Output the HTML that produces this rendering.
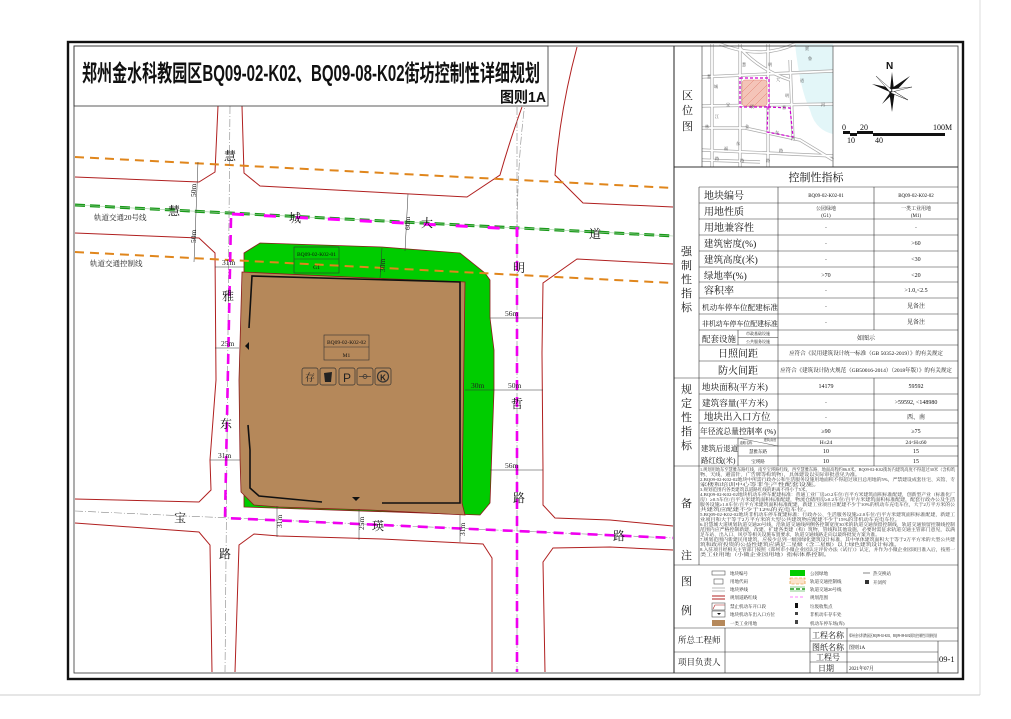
<!DOCTYPE html>
<html><head><meta charset="utf-8"><style>
html,body{margin:0;padding:0;background:#fff;}
svg{display:block;}
.s{font-family:"Liberation Serif","Noto Serif CJK SC",serif;}
.k{font-family:"Liberation Sans","Noto Sans CJK SC",sans-serif;}
</style></head><body>
<svg width="1011" height="719" viewBox="0 0 1011 719" xmlns="http://www.w3.org/2000/svg">
<rect width="1011" height="719" fill="#fff"/>
<line x1="980" y1="0" x2="980" y2="695" stroke="#ddd" stroke-width="1"/>
<line x1="0" y1="695" x2="980" y2="695" stroke="#ccc" stroke-width="1"/>

<!-- MAP -->
<g fill="none">
<g stroke="#b02020" stroke-width="1">
<path d="M75,177 L199,182 L215,172 L218,106"/>
<path d="M242,106 L244,173 L260,186 L410,194 L467,197 L500,175 Q510,140 522,107"/>
<path d="M577,47 Q560,110 555,175 L583,203 L673,207"/>
<path d="M75,233 L199,238 L215,253 L216,380 L210,460 L211,490 L199,502 L75,499"/>
<path d="M75,523 L199,532 L210,545 L212,672"/>
<path d="M235,672 L239,545 L254,534 L279,536 L382,539 L483,544 L492,558 L492,672"/>
<path d="M545,672 L543,562 L553,548 L610,547 L673,550"/>
<path d="M673,526 L610,520 L555,518 L543,505 L543,470 L542,353 L543,283 L577,259 L673,264"/>
</g>
<path d="M244,253 L260,243 L382,247 L460,253 L485,273 L490,280 L490,318 L494,350 L494,390 L490,503 L480,515 L244,507 Z" fill="#00cc00" stroke="#8b1a1a" stroke-width="0.8"/>
<path d="M242,272 L370,278 L465,282 L462,503 L465,515 L370,510 L279,507 L254,505 L241,492 L240,458 L239,380 Z" fill="#b5885a" stroke="#8b1a1a" stroke-width="0.8"/>
<g stroke="#111" stroke-width="1.6">
<path d="M249,328 L252,276 L460,282 L460,503 L382,503"/>
<path d="M248,425 L250,450 L250,488 L259,496 L322,502"/>
</g>
<g stroke="#e0861c" stroke-width="2" stroke-dasharray="9,6">
<path d="M75,157 L673,188"/>
<path d="M75,252 L673,283"/>
</g>
<path d="M75,205 L673,236" stroke="#fff" stroke-width="4"/>
<path d="M75,205 L673,236" stroke="#1a9a1a" stroke-width="3" stroke-dasharray="10,5"/>
<path d="M75,205 L673,236" stroke="#9c9" stroke-width="0.6"/>
<path d="M232,214 L517,229" stroke="#f0f" stroke-width="3" stroke-dasharray="12,20"/>
<g stroke="#888" stroke-width="0.6" stroke-dasharray="8,2,1,2">
<path d="M230,106 L225,672"/>
<path d="M75,511 L673,538"/>
<path d="M517,107 L517,672"/>
<path d="M535,47 Q518,120 517,230"/>
</g>
<g stroke="#f000f0" stroke-width="2.6" stroke-dasharray="10,7">
<path d="M231,218 L225,518 L673,538"/>
<path d="M517,227 L517,672"/>
</g>
<path d="M517,227 L517,236" stroke="#f0f" stroke-width="3"/>
<g stroke="#333" stroke-width="0.5">
<path d="M198,162 L194,262"/>
<path d="M408,194 L405,251"/>
<path d="M215,267 L244,267"/><path d="M215,348 L239,348"/>
<path d="M210,460 L240,460"/>
<path d="M382,248 L380,278"/>
<path d="M490,318 L543,318"/>
<path d="M465,390 L494,390"/><path d="M494,390 L543,390"/>
<path d="M490,470 L543,470"/>
<path d="M277,506 L277,537"/><path d="M359,509 L359,540"/><path d="M460,515 L460,542"/>
</g>
</g>
<g class="s" font-size="12" fill="#111" text-anchor="middle">
<text x="230" y="160">慧</text><text x="174" y="215">慧</text><text x="295" y="222">城</text>
<text x="427" y="227">大</text><text x="595" y="238">道</text>
<text x="228" y="300">雅</text><text x="226" y="428">东</text><text x="225" y="558">路</text>
<text x="180" y="522">宝</text><text x="378" y="530">瑛</text><text x="619" y="540">路</text>
<text x="519" y="272">明</text><text x="517" y="408">哲</text><text x="519" y="502">路</text>
</g>
<g class="s" font-size="7.5" fill="#222">
<text x="94" y="220">轨道交通20号线</text>
<text x="90" y="266">轨道交通控制线</text>
<text x="222" y="265">31m</text><text x="221" y="346">25m</text><text x="218" y="458">31m</text>
<text x="505" y="316">56m</text><text x="471" y="388">30m</text><text x="508" y="388">50m</text><text x="505" y="468">56m</text>
<text transform="translate(196,197) rotate(-90)">50m</text>
<text transform="translate(196,243) rotate(-90)">50m</text>
<text transform="translate(410,230) rotate(-90)">60m</text>
<text transform="translate(385,272) rotate(-90)">30m</text>
<text transform="translate(282,528) rotate(-90)">31m</text>
<text transform="translate(364,530) rotate(-90)">25m</text>
<text transform="translate(465,536) rotate(-90)">31m</text>
</g>
<g stroke="#333" stroke-width="0.6" fill="none">
<rect x="294" y="247" width="45" height="26"/><line x1="294" y1="259" x2="339" y2="259"/>
<rect x="324" y="335" width="45" height="25"/><line x1="324" y1="347" x2="369" y2="347"/>
</g>
<g class="s" font-size="5.5" fill="#111" text-anchor="middle">
<text x="316.5" y="256">BQ09-02-K02-01</text><text x="316.5" y="269">G1</text>
<text x="346.5" y="344">BQ09-02-K02-02</text><text x="346.5" y="357">M1</text>
</g>
<g stroke="#333" stroke-width="0.7" fill="none">
<rect x="302" y="368" width="16" height="17" rx="2"/>
<rect x="320" y="368" width="16" height="17" rx="2"/>
<rect x="339" y="368" width="16" height="17" rx="2"/>
<rect x="357" y="368" width="16" height="17" rx="2"/>
<rect x="375" y="368" width="16" height="17" rx="2"/>
<line x1="359" y1="376.5" x2="371" y2="376.5"/><circle cx="365" cy="376.5" r="2"/>
<circle cx="383" cy="376.5" r="5.5" stroke-width="1.2"/>
</g>
<path d="M324,373 L332,372 L331,382 L325,382 Z" fill="#222"/>
<g class="k" fill="#222" text-anchor="middle">
<text x="310" y="381" font-size="10" class="s">存</text>
<text x="347" y="382" font-size="12">P</text>
<text x="383" y="380.5" font-size="8" font-weight="bold">K</text>
</g>
<path d="M245,346 L249,342 L249,350 Z" fill="#111"/>
<path d="M352,497 L360,497 L356,501 Z" fill="#111"/>

<rect x="74" y="46" width="474" height="60" fill="#fff" stroke="#333" stroke-width="0.8"/>
<text class="k" x="82" y="81" font-size="23" font-weight="bold" textLength="458" lengthAdjust="spacingAndGlyphs" fill="#111">郑州金水科教园区BQ09-02-K02、BQ09-08-K02街坊控制性详细规划</text>
<text class="k" x="500" y="102" font-size="15" font-weight="bold" textLength="46" lengthAdjust="spacingAndGlyphs" fill="#111">图则1A</text>

<!-- RIGHT PANEL -->
<rect x="674" y="46" width="284" height="627" fill="#fff"/>
<g>
<path d="M795,44 L833,44 L833,134 Q815,130 810,110 Q800,90 795,44 Z" fill="#e3f6f8"/>
<g stroke="#aaa" stroke-width="3.2" fill="none">
<path d="M702,77 L833,71"/><path d="M702,106 L833,104"/><path d="M702,128 L745,128 L800,140 L833,160"/>
<path d="M702,150 L833,156"/><path d="M702,160 L760,162"/>
<path d="M712,44 L712,167"/><path d="M740,44 L740,167"/><path d="M768,44 L768,167"/>
<path d="M790,60 L793,140"/><path d="M720,44 Q760,60 795,44"/><path d="M740,48 Q760,70 790,80"/>
</g>
<g stroke="#fff" stroke-width="1.8" fill="none">
<path d="M702,77 L833,71"/><path d="M702,106 L833,104"/><path d="M702,128 L745,128 L800,140 L833,160"/>
<path d="M702,150 L833,156"/><path d="M702,160 L760,162"/>
<path d="M712,44 L712,167"/><path d="M740,44 L740,167"/><path d="M768,44 L768,167"/>
<path d="M790,60 L793,140"/><path d="M720,44 Q760,60 795,44"/><path d="M740,48 Q760,70 790,80"/>
</g>
<rect x="742" y="80" width="25" height="26" rx="3" fill="#f4c4b8" stroke="#e08070" stroke-width="0.5"/>
<g stroke="#e08070" stroke-width="0.5"><path d="M742,92 L754,80 M742,100 L762,80 M746,106 L767,85 M754,106 L767,93"/></g>
<g stroke="#d000d0" stroke-width="1.2" stroke-dasharray="3,2" fill="none">
<path d="M740,78 L769,78 L769,107 L740,107 Z"/>
<path d="M768,107 L790,108 L793,137 L767,132 Z"/>
</g>
<g class="s" font-size="4" fill="#444">
<text x="742" y="66">慧</text><text x="768" y="66">明</text><text x="776" y="81">大</text><text x="800" y="82">道</text>
<text x="707" y="78">慧</text><text x="714" y="88">城</text><text x="726" y="106">宝</text><text x="750" y="108">瑛</text>
<text x="785" y="97">明</text><text x="782" y="109">哲</text><text x="821" y="106">河</text><text x="805" y="50">贾</text><text x="808" y="60">鲁</text>
<text x="715" y="118">江</text><text x="705" y="128">林</text><text x="745" y="128">金</text><text x="736" y="145">东</text><text x="724" y="150">福</text><text x="775" y="134">东</text><text x="791" y="140">裕</text><text x="779" y="152">路</text><text x="715" y="160">路</text><text x="740" y="162">路</text><text x="766" y="162">路</text>
</g>
</g>
<text class="k" x="886" y="69" font-size="10" font-weight="bold" fill="#111">N</text>
<g transform="translate(892,90)">
<path d="M0,-18 L2,0 L-2,0 Z" fill="#111"/>
<path d="M0,22 L3,0 L-3,0 Z" fill="#111"/>
<path d="M-20,-6 L0,-2 L0,3 Z" fill="#111"/>
<path d="M18,-14 L0,-2 L2,3 Z" fill="#111"/>
<path d="M-10,14 L0,0 L3,2 Z" fill="#111"/>
<path d="M16,10 L0,0 L-1,3 Z" fill="#fff" stroke="#111" stroke-width="0.5"/>
<path d="M-16,-14 L0,0 L-2,2 Z" fill="#fff" stroke="#111" stroke-width="0.4"/>
<path d="M20,-3 L0,-1 L0,2 Z" fill="#fff" stroke="#111" stroke-width="0.4"/>
</g>
<g fill="#111">
<rect x="843" y="131" width="7" height="3"/><rect x="850" y="133" width="7" height="3"/><rect x="857" y="131" width="16" height="3"/><rect x="873" y="133" width="72" height="3"/>
</g>
<g class="s" font-size="8" fill="#111">
<text x="842" y="130">0</text><text x="860" y="130">20</text><text x="933" y="130">100M</text>
<text x="847" y="143">10</text><text x="875" y="143">40</text>
</g>
<g stroke="#333" stroke-width="0.6" fill="none">
<line x1="702" y1="46" x2="702" y2="167"/><line x1="833" y1="46" x2="833" y2="167"/>
<line x1="674" y1="167" x2="958" y2="167" stroke-width="0.9"/>
<line x1="699" y1="187" x2="958" y2="187"/>
<line x1="699" y1="187" x2="699" y2="565"/>
<line x1="778" y1="187" x2="778" y2="466"/>
<line x1="874" y1="187" x2="874" y2="330"/>
<line x1="874" y1="378" x2="874" y2="466"/>
<line x1="699" y1="203" x2="958" y2="203"/><line x1="699" y1="219" x2="958" y2="219"/><line x1="699" y1="235" x2="958" y2="235"/>
<line x1="699" y1="251" x2="958" y2="251"/><line x1="699" y1="267" x2="958" y2="267"/><line x1="699" y1="282" x2="958" y2="282"/>
<line x1="699" y1="298" x2="958" y2="298"/><line x1="699" y1="314" x2="958" y2="314"/><line x1="699" y1="330" x2="958" y2="330"/>
<line x1="738" y1="330" x2="738" y2="345"/><line x1="738" y1="337.5" x2="778" y2="337.5"/>
<line x1="699" y1="345" x2="958" y2="345"/><line x1="699" y1="361" x2="958" y2="361"/>
<line x1="674" y1="378" x2="958" y2="378"/>
<line x1="699" y1="394" x2="958" y2="394"/><line x1="699" y1="410" x2="958" y2="410"/><line x1="699" y1="423" x2="958" y2="423"/>
<line x1="699" y1="438" x2="958" y2="438"/>
<line x1="738" y1="438" x2="738" y2="466"/><line x1="738" y1="446" x2="958" y2="446"/><line x1="738" y1="456" x2="958" y2="456"/>
<line x1="738" y1="438" x2="778" y2="446" stroke-width="0.4"/>
<line x1="674" y1="466" x2="958" y2="466"/>
<line x1="674" y1="565" x2="958" y2="565"/>
<line x1="674" y1="628" x2="958" y2="628"/>
<line x1="725" y1="628" x2="725" y2="673"/><line x1="810" y1="628" x2="810" y2="673"/><line x1="847" y1="628" x2="847" y2="673"/>
<line x1="674" y1="652" x2="810" y2="652"/>
<line x1="810" y1="641" x2="958" y2="641"/><line x1="810" y1="652" x2="938" y2="652"/><line x1="810" y1="662" x2="938" y2="662"/>
<line x1="938" y1="641" x2="938" y2="673"/>
</g>
<g class="s" fill="#111">
<text x="682" y="99" font-size="11">区</text><text x="682" y="114" font-size="11">位</text><text x="682" y="130" font-size="11">图</text>
<text x="816" y="181" font-size="11" text-anchor="middle">控制性指标</text>
<g font-size="11"><text x="681" y="255">强</text><text x="681" y="269">制</text><text x="681" y="283">性</text><text x="681" y="297">指</text><text x="681" y="311">标</text>
<text x="681" y="393">规</text><text x="681" y="407">定</text><text x="681" y="421">性</text><text x="681" y="435">指</text><text x="681" y="449">标</text>
<text x="681" y="507">备</text><text x="681" y="559">注</text>
<text x="681" y="585">图</text><text x="681" y="614">例</text></g>
<g font-size="10">
<text x="704" y="199">地块编号</text><text x="704" y="215">用地性质</text><text x="704" y="231">用地兼容性</text>
<text x="704" y="247" font-size="9.5">建筑密度(%)</text><text x="704" y="263" font-size="9.5">建筑高度(米)</text><text x="704" y="279" font-size="9.5">绿地率(%)</text>
<text x="704" y="294">容积率</text>
<text x="702" y="310" font-size="7.6">机动车停车位配建标准</text>
<text x="702" y="326" font-size="6.9">非机动车停车位配建标准</text>
<text x="702" y="342" font-size="8.5">配套设施</text>
<text x="718" y="357">日照间距</text><text x="718" y="374">防火间距</text>
<text x="702" y="390" font-size="8.6">地块面积(平方米)</text><text x="702" y="406" font-size="8.6">建筑容量(平方米)</text>
<text x="704" y="420" font-size="9.5">地块出入口方位</text>
<text x="700" y="434" font-size="7.8">年径流总量控制率 (%)</text>
<text x="701" y="451" font-size="7.4">建筑后退道</text><text x="701" y="463" font-size="7.4">路红线(米)</text>
</g>
<g font-size="5" text-anchor="middle">
<text x="826" y="197">BQ09-02-K02-01</text><text x="916" y="197">BQ09-02-K02-02</text>
<text x="826" y="210">公园绿地</text><text x="826" y="217">(G1)</text><text x="916" y="210">一类工业用地</text><text x="916" y="217">(M1)</text>
<text x="826" y="229">-</text><text x="916" y="229">-</text>
<text x="826" y="245">-</text><text x="916" y="245" font-size="6">&gt;60</text>
<text x="826" y="261">-</text><text x="916" y="261" font-size="6">&lt;30</text>
<text x="826" y="277" font-size="6">&gt;70</text><text x="916" y="277" font-size="6">&lt;20</text>
<text x="826" y="292">-</text><text x="916" y="292" font-size="6">&gt;1.0,&lt;2.5</text>
<text x="826" y="308">-</text><text x="916" y="308" font-size="6">见备注</text>
<text x="826" y="324">-</text><text x="916" y="324" font-size="6">见备注</text>
<text x="758" y="335" font-size="4">市政基础设施</text><text x="758" y="343" font-size="4">公共服务设施</text>
<text x="866" y="340" font-size="6">如图示</text>
<text x="866" y="355" font-size="5.5">应符合《民用建筑设计统一标准（GB 50352-2019）》的有关规定</text>
<text x="866" y="372" font-size="5.5">应符合《建筑设计防火规范（GB50016-2014）（2018年版）》的有关规定</text>
<text x="826" y="388" font-size="6">14179</text><text x="916" y="388" font-size="6">59592</text>
<text x="826" y="404">-</text><text x="916" y="404" font-size="6">&gt;59592, &lt;148980</text>
<text x="826" y="419">-</text><text x="916" y="419" font-size="6">西、南</text>
<text x="826" y="433" font-size="6">≥90</text><text x="916" y="433" font-size="6">≥75</text>
<text x="826" y="444" font-size="5.5">H≤24</text><text x="916" y="444" font-size="5.5">24&lt;H≤60</text>
<text x="758" y="453" font-size="4.5">慧雅东路</text><text x="826" y="453" font-size="6">10</text><text x="916" y="453" font-size="6">15</text>
<text x="758" y="463" font-size="4.5">宝瑛路</text><text x="826" y="463" font-size="6">10</text><text x="916" y="463" font-size="6">15</text>
<text x="746" y="444" font-size="3.2">道路名称</text><text x="770" y="441" font-size="3.2">建筑高度</text>
</g>
</g>
<g class="s" font-size="4.3" fill="#333">
<text x="700" y="471" textLength="255" lengthAdjust="spacingAndGlyphs">1.规划用地东至慧雅东路红线，南至宝瑛路红线，西至慧雅东路，地面高程约86.8米。BQ09-02-K02街坊内建筑高度不得超过30米（含构筑</text>
<text x="700" y="476" textLength="160" lengthAdjust="spacingAndGlyphs">物、天线、避雷针、广告牌等构筑物），具体建设以实际审批意见为准。</text>
<text x="700" y="481" textLength="255" lengthAdjust="spacingAndGlyphs">2.BQ09-02-K02-02地块中所需行政办公和生活服务设施用地面积不得超过项目总用地的5%，严禁建设成套住宅、宾馆、专</text>
<text x="700" y="486" textLength="120" lengthAdjust="spacingAndGlyphs">家楼和培训中心等非生产性配套设施。</text>
<text x="700" y="491" textLength="110" lengthAdjust="spacingAndGlyphs">3.规划范围内各类建筑以道路红线的距离不得小于5米。</text>
<text x="700" y="496" textLength="255" lengthAdjust="spacingAndGlyphs">4.BQ09-02-K02-02地块机动车停车配建标准：普通工业厂房≥0.2车位/百平方米建筑面积标准配建，创新型产业（标准化厂</text>
<text x="700" y="501" textLength="255" lengthAdjust="spacingAndGlyphs">房）≥0.5车位/百平方米建筑面积标准配建，物流仓储用房≥0.2车位/百平方米建筑面积标准配建，配套行政办公及生活</text>
<text x="700" y="506" textLength="255" lengthAdjust="spacingAndGlyphs">服务设施≥1.0车位/百平方米建筑面积标准配建，新建工业项目应配建不少于10%的机动车充电车位，大于2万平方米的公</text>
<text x="700" y="511" textLength="110" lengthAdjust="spacingAndGlyphs">共建筑应配建不少于12%的充电车位。</text>
<text x="700" y="516" textLength="255" lengthAdjust="spacingAndGlyphs">5.BQ09-02-K02-02地块非机动车停车配建标准：行政办公、生活服务设施≥2.0车位/百平方米建筑面积标准配建，新建工</text>
<text x="700" y="521" textLength="200" lengthAdjust="spacingAndGlyphs">业项目和大于等于2万平方米的大型公共建筑物应配建不少于15%的非机动车充电车位。</text>
<text x="700" y="526" textLength="255" lengthAdjust="spacingAndGlyphs">6.沿慧城大道规划轨道交通20号线，沿轨道交通线两侧各控制宽度30米的轨道交通预留控制线，轨道交通预留控制线控制</text>
<text x="700" y="531" textLength="255" lengthAdjust="spacingAndGlyphs">范围内应严格控制新建、改建、扩建各类建（构）筑物，管线和其他设施，必要时需征求轨道交通主管部门意见，以满</text>
<text x="700" y="536" textLength="180" lengthAdjust="spacingAndGlyphs">足车站、出入口、风亭等相关设施布置要求，轨道交通线路走向以最终批复方案为准。</text>
<text x="700" y="541" textLength="255" lengthAdjust="spacingAndGlyphs">7.规划范围内新建民用建筑，应按少总到一级园绿化建筑设计标准，其中单体建筑面积大于等于2万平方米的大型公共建</text>
<text x="700" y="546" textLength="200" lengthAdjust="spacingAndGlyphs">筑和政府投资的公益性建筑应满足二星级（含二星级）以上绿色建筑设计标准。</text>
<text x="700" y="551" textLength="255" lengthAdjust="spacingAndGlyphs">8.入驻项目经相关主管部门按照《郑州市小微企业园认定评价办法（试行）》认定，并作为小微企业园项目准入后，按照一</text>
<text x="700" y="556" textLength="130" lengthAdjust="spacingAndGlyphs">类工业用地（小微企业园用地）指标体系控制。</text>
</g>
<g stroke-width="0.6">
<rect x="712" y="571" width="13" height="4" fill="#fff" stroke="#555"/>
<rect x="714" y="579" width="9" height="5" fill="#fff" stroke="#555"/>
<path d="M712,588 L725,588 M712,591 L725,591" stroke="#777"/>
<path d="M712,596 L725,596 M712,599 L725,599" stroke="#b02020" stroke-width="0.9"/>
<path d="M713,609 L715,605 L725,605" stroke="#b02020" fill="none"/><rect x="712" y="603" width="13" height="7" fill="none" stroke="#555"/>
<rect x="712" y="611" width="13" height="6" fill="#fff" stroke="#555"/><path d="M717,613 L721,613 L719,615 Z" fill="#111"/>
<rect x="712" y="620" width="13" height="6" fill="#b5885a"/>
<rect x="790" y="570" width="15" height="6" fill="#00cc00"/>
<rect x="790" y="578" width="15" height="6" fill="#fbe3cc" stroke="#e0861c" stroke-dasharray="3,1.5"/>
<path d="M790,587 L805,587 M790,591 L805,591" stroke="#1a9a1a"/><path d="M790,589 L805,589" stroke="#1a9a1a" stroke-width="1.5" stroke-dasharray="4,2"/>
<path d="M790,597 L805,597" stroke="#f0f" stroke-dasharray="3,2"/>
<rect x="795" y="603" width="3" height="5" fill="#111"/>
<rect x="795" y="612" width="3" height="3" fill="#444"/>
<rect x="795" y="620" width="3" height="4" fill="#444"/>
<path d="M863,573 L870,573" stroke="#333"/><rect x="865" y="580" width="4" height="4" fill="#333"/>
</g>
<g class="s" font-size="4.5" fill="#222">
<text x="730" y="575">地块编号</text><text x="730" y="583">用地代码</text><text x="730" y="591">地块界线</text><text x="730" y="599">规划道路红线</text><text x="730" y="608">禁止机动车开口段</text><text x="730" y="616">地块机动车出入口方位</text><text x="730" y="625">一类工业用地</text>
<text x="810" y="575">公园绿地</text><text x="810" y="583">轨道交通控制线</text><text x="810" y="591">轨道交通20号线</text><text x="810" y="599">规划范围</text><text x="810" y="608">垃圾收集点</text><text x="810" y="616">非机动车存车处</text><text x="810" y="625">机动车停车场(库)</text>
<text x="873" y="575">热交换站</text><text x="873" y="584">开闭所</text>
</g>
<g class="s" fill="#111">
<text x="678" y="643" font-size="8.5">所总工程师</text>
<text x="678" y="665" font-size="8.5">项目负责人</text>
<text x="812" y="638" font-size="8">工程名称</text><text x="812" y="650" font-size="8">图纸名称</text>
<text x="816" y="660" font-size="8">工程号</text><text x="818" y="671" font-size="8">日期</text>
<text x="849" y="637" font-size="4.2" textLength="88" lengthAdjust="spacingAndGlyphs">郑州金水科教园区BQ09-02-K02、BQ09-08-K02街坊控制性详细规划</text>
<text x="849" y="649" font-size="5">图则1A</text>
<text x="849" y="670" font-size="5">2021年07月</text>
<text x="939" y="662" font-size="8.5">09-1</text>
</g>
<line x1="674" y1="46" x2="674" y2="673" stroke="#222" stroke-width="1"/>
<rect x="74" y="46" width="884" height="627" fill="none" stroke="#333" stroke-width="0.8"/>
<rect x="68" y="42" width="895" height="637" fill="none" stroke="#111" stroke-width="2.4"/>
</svg>
</body></html>
